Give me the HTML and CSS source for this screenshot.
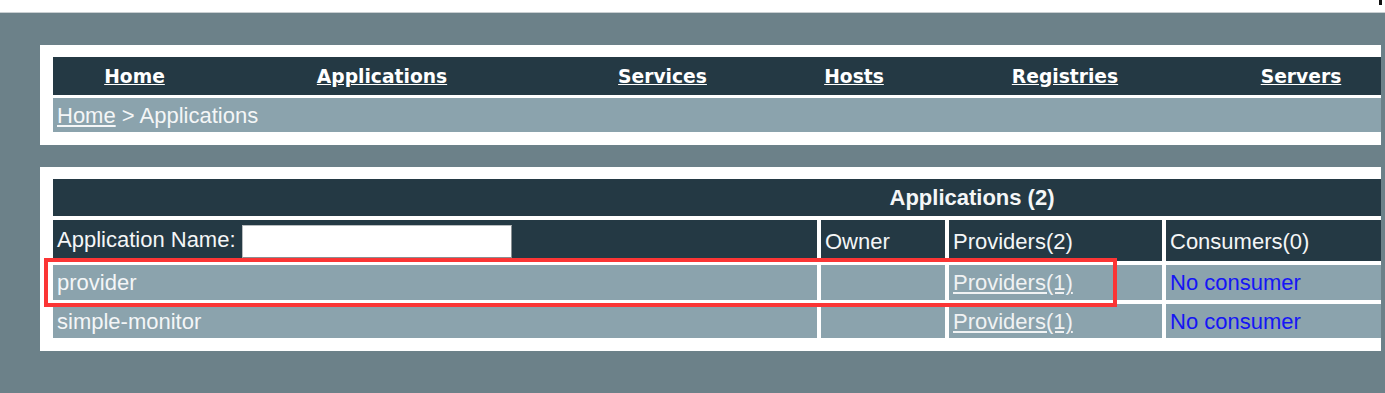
FILE: index.html
```html
<!DOCTYPE html>
<html lang="en">
<head>
  <meta charset="UTF-8" />
  <title>Applications</title>
  <link rel="stylesheet" href="styles.css">
</head>
<body>
  <div class="topbar"><span class="corner"></span></div>

  <div class="page">
    <div class="panel panel-nav">
      <div class="menu">
        <div class="menu-item m-home"><a href="#">Home</a></div>
        <div class="menu-item m-apps"><a href="#">Applications</a></div>
        <div class="menu-item m-services"><a href="#">Services</a></div>
        <div class="menu-item m-hosts"><a href="#">Hosts</a></div>
        <div class="menu-item m-registries"><a href="#">Registries</a></div>
        <div class="menu-item m-servers"><a href="#">Servers</a></div>
      </div>
      <div class="crumb"><a href="#">Home</a> &gt; Applications</div>
    </div>

    <div class="panel panel-list">
      <table class="list">
        <colgroup>
          <col class="c-name">
          <col class="c-owner">
          <col class="c-prov">
          <col class="c-cons">
        </colgroup>
        <tr class="row-title">
          <th colspan="4">Applications (2)</th>
        </tr>
        <tr class="row-head">
          <td>Application Name: <input class="filter" type="text"></td>
          <td>Owner</td>
          <td>Providers(2)</td>
          <td>Consumers(0)</td>
        </tr>
        <tr class="row-data first">
          <td>provider</td>
          <td></td>
          <td><a href="#">Providers(1)</a></td>
          <td class="none">No consumer</td>
        </tr>
        <tr class="row-data">
          <td>simple-monitor</td>
          <td></td>
          <td><a href="#">Providers(1)</a></td>
          <td class="none">No consumer</td>
        </tr>
      </table>
      <div class="mark"></div>
    </div>
  </div>
</body>
</html>
```

FILE: styles.css
```css
body {
  margin: 0;
  padding: 0;
  background: #6c8189;
  font-family: "Liberation Sans", Arial, sans-serif;
  font-size: 22px;
  color: #f4f6f7;
  overflow: hidden;
}

.topbar {
  height: 12px;
  background: #fff;
  border-bottom: 1px solid #c9cfd2;
  display: flex;
  justify-content: flex-end;
  padding-right: 3px;
}

.corner {
  width: 3px;
  height: 5px;
  background: #111;
}

.page {
  padding: 32px 0 0 40px;
}

.panel {
  width: 1341px;
  background: #fff;
  overflow: hidden;
  position: relative;
}

.panel-nav {
  padding: 12px 0 13px 13px;
  box-sizing: border-box;
}

.menu {
  display: flex;
  width: 1500px;
  height: 38px;
  background: #243944;
  align-items: center;
}

.menu-item {
  flex: none;
  text-align: center;
  font-family: "DejaVu Sans", Verdana, sans-serif;
  font-weight: bold;
  font-size: 18.7px;
}

.menu-item a {
  color: #fff;
}

.m-home { width: 163px; }
.m-apps { width: 332px; }
.m-services { width: 229px; }
.m-hosts { width: 154px; }
.m-registries { width: 268px; }
.m-servers { width: 204px; }

.crumb {
  margin-top: 3px;
  height: 34px;
  line-height: 36px;
  background: #8ba3ad;
  padding-left: 4px;
}

.crumb a {
  color: #f4f6f7;
}

.panel-list {
  margin-top: 22px;
  padding: 8px 0 9px 9px;
  box-sizing: border-box;
}

.list {
  table-layout: fixed;
  width: 1846px;
  border-collapse: separate;
  border-spacing: 4px;
}

.c-name { width: 764px; }
.c-owner { width: 124px; }
.c-prov { width: 213px; }
.c-cons { width: 725px; }

.list td,
.list th {
  padding: 0 4px;
  text-align: left;
  white-space: nowrap;
}

.row-title th {
  height: 37px;
  background: #243944;
  text-align: center;
  font-weight: bold;
}

.row-head td {
  height: 39px;
  padding-top: 2px;
  background: #243944;
}

.row-data td {
  height: 32px;
  padding-top: 2px;
  background: #8ba3ad;
}

.row-data.first td {
  height: 34px;
  padding-top: 1px;
}

.row-data a {
  color: #f0f2f3;
}

.row-data .none {
  color: #1515f5;
}

.filter {
  box-sizing: border-box;
  width: 270px;
  height: 33px;
  margin: 0;
  border: 1px solid #b8bcbe;
  border-right-color: #8a8f92;
  border-bottom-color: #8a8f92;
  background: #fff;
  vertical-align: middle;
}

.mark {
  position: absolute;
  left: 4px;
  top: 91px;
  width: 1073px;
  height: 49px;
  border: 4px solid #fb3535;
  box-sizing: border-box;
}
```
